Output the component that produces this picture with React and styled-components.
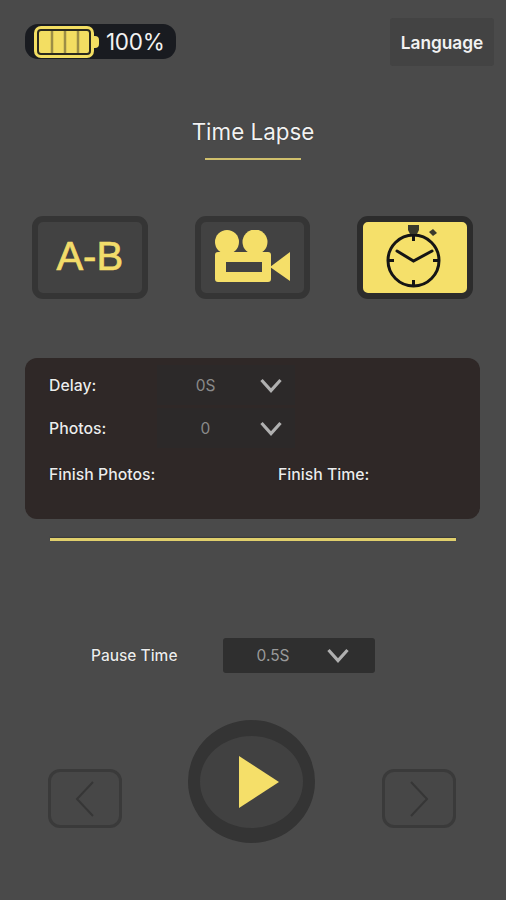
import React from "react";
import styled, { createGlobalStyle } from "styled-components";

const Global = createGlobalStyle`
  html, body { margin: 0; padding: 0; background: #4a4a4a; }
  * { box-sizing: border-box; }
`;

const Page = styled.div`
  width: 506px;
  height: 900px;
  overflow: hidden;
  display: flex;
  flex-direction: column;
  background: #4a4a4a;
  font-family: Inter, "Liberation Sans", sans-serif;
  color: #f2f2f2;
`;

const Header = styled.header`
  display: flex;
  justify-content: space-between;
  align-items: flex-start;
  padding: 18px 12px 0 25px;
`;

const BatteryPill = styled.div`
  width: 151px;
  height: 35px;
  margin-top: 6px;
  padding-left: 8px;
  display: flex;
  align-items: center;
  gap: 7px;
  border-radius: 13px;
  background: #191b20;
  font-size: 22.5px;
  letter-spacing: -0.3px;
`;

const LanguageButton = styled.div`
  width: 104px;
  height: 48px;
  display: flex;
  align-items: center;
  justify-content: center;
  background: #434343;
  border-radius: 3px;
  font-size: 17.3px;
  font-weight: 600;
`;

const Title = styled.h1`
  margin: 52px 0 0;
  text-align: center;
  font-size: 22.4px;
  line-height: 28px;
  font-weight: 400;
  text-shadow: 0 0 1px rgba(0, 0, 0, 0.6);
`;

const TitleRule = styled.div`
  width: 96px;
  height: 2px;
  margin: 12px auto 0;
  background: #cfbf6c;
`;

const Modes = styled.div`
  display: flex;
  gap: 47px;
  margin-top: 56px;
  padding-left: 32px;
`;

const ModeButton = styled.div`
  width: 115.5px;
  height: 83px;
  display: flex;
  align-items: center;
  justify-content: center;
  border-radius: 11px;
  border: ${(p) => (p.$active ? "6px solid #2c2c2c" : "6px solid #353535")};
  background: ${(p) => (p.$active ? "#f5e06a" : "#424242")};
  color: #f2dc6a;
  font-family: "Liberation Sans", Arial, sans-serif;
  font-size: 40px;
  -webkit-text-stroke: 0.7px #f2dc6a;
  padding-bottom: 3px;
`;

const Panel = styled.section`
  margin: 59px 26px 0 25px;
  height: 161px;
  padding: 7px 0 0 24px;
  border-radius: 12px;
  background: #2f2827;
  font-size: 15.8px;
`;

const PanelRow = styled.div`
  display: flex;
  align-items: center;
  height: 40px;
  margin-bottom: 3px;
`;

const FieldLabel = styled.span`
  width: ${(p) => p.$width || "108px"};
  font-weight: 500;
  color: #ececec;
  text-shadow: 0 0 1px rgba(0, 0, 0, 0.7);
`;

const FieldSelect = styled.div`
  width: 138px;
  height: 40px;
  display: grid;
  grid-template-columns: 97px 22px;
  column-gap: 6px;
  align-items: center;
  background: #2c2929;
  color: #8a8a8a;
  font-size: 15.5px;
  text-align: center;
`;

const SummaryRow = styled.div`
  display: flex;
  align-items: center;
  height: 20px;
  margin-top: 16px;
`;

const Divider = styled.div`
  width: 406px;
  height: 3px;
  margin: 19px 0 0 50px;
  background: #e0cf6c;
  box-shadow: 0 -1px 1px #3a3a3a;
`;

const PauseRow = styled.div`
  display: flex;
  align-items: center;
  margin: 97px 0 0 91px;
`;

const PauseLabel = styled.span`
  width: 132px;
  font-size: 15.5px;
  font-weight: 500;
  color: #ececec;
  text-shadow: 0 0 1px rgba(0, 0, 0, 0.7);
`;

const PauseSelect = styled.div`
  width: 152px;
  height: 35px;
  display: grid;
  grid-template-columns: 100px 22px;
  column-gap: 4px;
  align-items: center;
  border-radius: 3px;
  background: #2f2f2f;
  color: #9a9a9a;
  font-size: 15.5px;
  text-align: center;
`;

const Transport = styled.div`
  display: flex;
  margin: 47px 0 0 48px;
`;

const StepButton = styled.div`
  width: 74px;
  height: 59px;
  margin-top: 49px;
  display: flex;
  align-items: center;
  justify-content: center;
  border: 3.5px solid #3a3a3a;
  border-radius: 12px;
  background: #474747;
`;

const PlayButton = styled.div`
  width: 127px;
  height: 123px;
  margin: 0 67px 0 66px;
  display: flex;
  align-items: center;
  justify-content: center;
  border-radius: 50%;
  border-style: solid;
  border-color: #343434;
  border-width: 16px 12.5px 15px;
  background: #414141;
`;

const Chevron = ({ color = "#b0b0b0" }) => (
  <svg width="22" height="15" viewBox="0 0 22 15" fill="none">
    <path d="M1.5 2 L11 12.5 L20.5 2" stroke={color} strokeWidth="3.2" />
  </svg>
);

const BatteryIcon = () => (
  <svg width="66" height="34" viewBox="0 0 66 34">
    <rect x="1" y="1" width="60" height="32" rx="7" fill="#f3de62" />
    <path d="M60 11 h2 q4 0 4 4 v4 q0 4 -4 4 h-2z" fill="#f3de62" />
    <rect x="5" y="5" width="52" height="24" rx="3" fill="none" stroke="#2b2a1e" strokeWidth="2" />
    <path d="M19 6v22M32 6v22M45 6v22" stroke="#9c8e46" strokeWidth="2.5" />
  </svg>
);

const CameraIcon = () => (
  <svg width="75" height="52" viewBox="0 0 75 52">
    <circle cx="12" cy="12" r="12" fill="#f5df69" />
    <circle cx="40" cy="12" r="12.5" fill="#f5df69" />
    <path fillRule="evenodd" d="M3 22 H53 Q56 22 56 25 V49 Q56 52 53 52 H3 Q0 52 0 49 V25 Q0 22 3 22Z M11 32 V42 H47 V32Z" fill="#f5df69" />
    <path d="M55 37 L75 22 V51 Z" fill="#f5df69" />
  </svg>
);

const StopwatchIcon = () => (
  <svg width="58" height="64" viewBox="-2 0 58 64" fill="none" stroke="#151515" strokeWidth="3">
    <circle cx="25.5" cy="36.5" r="25.5" />
    <path d="M1 36.5h5M45 36.5h5M25.5 12v5M25.5 56v5" />
    <path d="M9 27 L25.5 37 L44 27" strokeLinecap="round" />
    <path d="M20 1h11v5l-2 4h-7l-2-4z" fill="#3a3a2c" stroke="none" />
    <path d="M41 8l4-3 4 4-4 3z" fill="#3a3a2c" stroke="none" />
  </svg>
);

const ArrowIcon = ({ left }) => (
  <svg width="20" height="36" viewBox="0 0 20 36" fill="none">
    <path d={left ? "M18 1 L2 18 L18 35" : "M2 1 L18 18 L2 35"} stroke="#363636" strokeWidth="2" />
  </svg>
);

const PlayIcon = () => (
  <svg width="42" height="54" viewBox="0 0 42 54" style={{ marginLeft: 14, marginTop: -1 }}>
    <path d="M1 1 L41 27 L1 53Z" fill="#f5df69" />
  </svg>
);

export default function App() {
  return (
    <Page>
      <Global />
      <Header>
        <BatteryPill>
          <BatteryIcon />
          100%
        </BatteryPill>
        <LanguageButton>Language</LanguageButton>
      </Header>
      <Title>Time Lapse</Title>
      <TitleRule />
      <Modes>
        <ModeButton>A-B</ModeButton>
        <ModeButton><CameraIcon /></ModeButton>
        <ModeButton $active><StopwatchIcon /></ModeButton>
      </Modes>
      <Panel>
        <PanelRow>
          <FieldLabel>Delay:</FieldLabel>
          <FieldSelect>0S<Chevron /></FieldSelect>
        </PanelRow>
        <PanelRow>
          <FieldLabel>Photos:</FieldLabel>
          <FieldSelect>0<Chevron /></FieldSelect>
        </PanelRow>
        <SummaryRow>
          <FieldLabel $width="229px">Finish Photos:</FieldLabel>
          <FieldLabel>Finish Time:</FieldLabel>
        </SummaryRow>
      </Panel>
      <Divider />
      <PauseRow>
        <PauseLabel>Pause Time</PauseLabel>
        <PauseSelect>0.5S<Chevron /></PauseSelect>
      </PauseRow>
      <Transport>
        <StepButton><ArrowIcon left /></StepButton>
        <PlayButton><PlayIcon /></PlayButton>
        <StepButton><ArrowIcon /></StepButton>
      </Transport>
    </Page>
  );
}
